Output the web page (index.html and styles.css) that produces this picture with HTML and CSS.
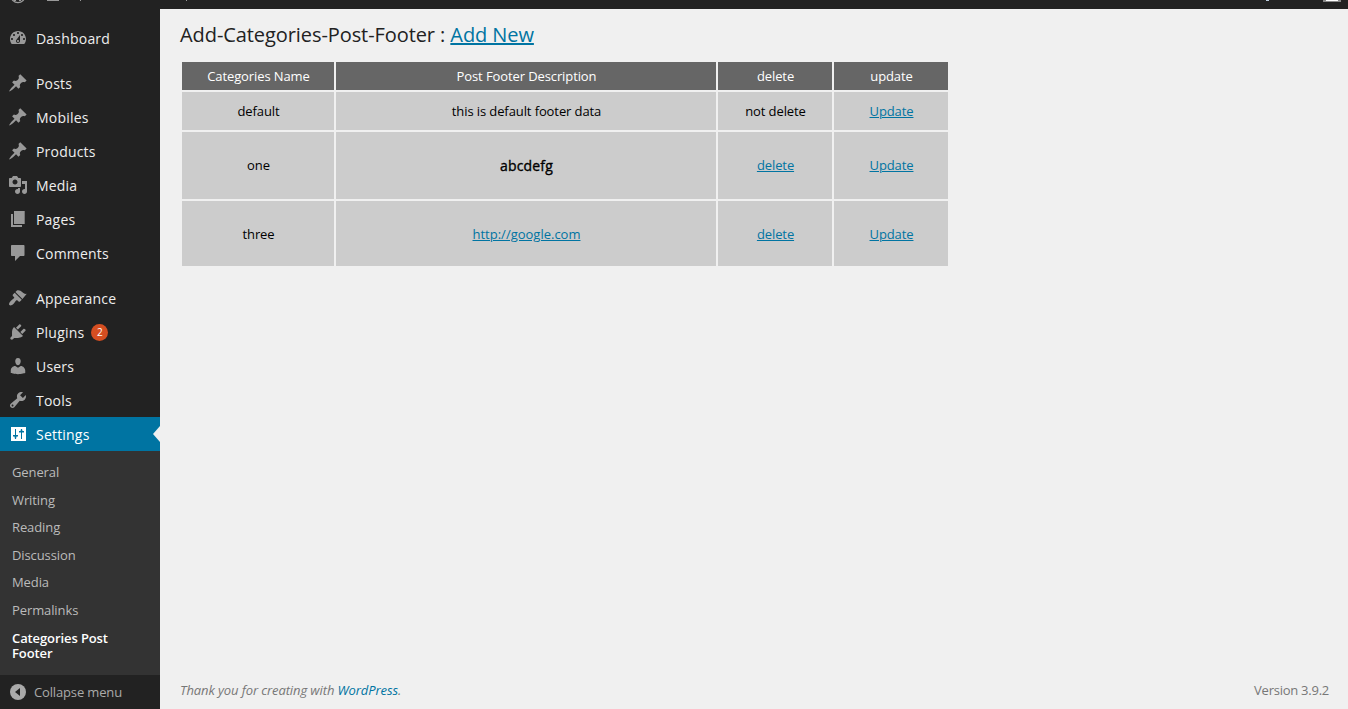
FILE: index.html
```html
<!DOCTYPE html>
<html lang="en">
<head>
<meta charset="utf-8">
<title>Categories Post Footer</title>
<link rel="stylesheet" href="styles.css">
</head>
<body>
<header class="adminbar">
  <svg class="adminbar-icons" width="200" height="9" viewBox="0 0 200 9"><circle cx="18" cy="-4.600" r="7.2" fill="none" stroke="#999" stroke-width="1.2"/><path d="M14 0h2v1h-2zM19 0h2v1h-2zM47 0h12v1h-12z" fill="#999"/><path d="M80 0h1v1h-1zM186 0h1v1h-1z" fill="#999"/></svg>
  <svg class="adminbar-user" width="90" height="9" viewBox="0 0 90 9"><path d="M8 0h3v1H8z" fill="#bcd"/><path d="M65 0h18v2H65z" fill="#888"/><path d="M68 0h12v1H68z" fill="#fff"/></svg>
</header>
<div class="shell">
  <nav class="menu">
    <a class="item"><svg class="icon" viewBox="0 0 20 20"><path fill-rule="evenodd" d="M3.76 16h12.48c1.1-1.37 1.76-3.11 1.76-5 0-4.42-3.58-8-8-8s-8 3.58-8 8c0 1.89.66 3.63 1.76 5zM10 4c.55 0 1 .45 1 1s-.45 1-1 1-1-.45-1-1 .45-1 1-1zM6 6c.55 0 1 .45 1 1s-.45 1-1 1-1-.45-1-1 .45-1 1-1zm8 0c.55 0 1 .45 1 1s-.45 1-1 1-1-.45-1-1 .45-1 1-1zm-5.37 5.55L12 7v6c0 1.1-.9 2-2 2s-2-.9-2-2c0-.57.24-1.08.63-1.45zM4 10c.55 0 1 .45 1 1s-.45 1-1 1-1-.45-1-1 .45-1 1-1zm12 0c.55 0 1 .45 1 1s-.45 1-1 1-1-.45-1-1 .45-1 1-1zm-5 3c0-.55-.45-1-1-1s-1 .45-1 1 .45 1 1 1 1-.45 1-1z"/></svg><span class="label">Dashboard</span></a>
    <div class="separator"></div>
    <a class="item"><svg class="icon" viewBox="0 0 20 20"><path id="pin" d="M10.44 3.02l1.82-1.82 6.36 6.35-1.83 1.82c-1.05-.68-2.48-.57-3.41.36l-.75.75c-.92.93-1.04 2.35-.35 3.41l-1.83 1.82-2.41-2.41-2.8 2.79c-.42.42-3.38 2.71-3.8 2.29s1.86-3.39 2.28-3.81l2.79-2.79L4.1 9.36l1.83-1.82c1.05.69 2.48.57 3.4-.36l.75-.75c.93-.92 1.05-2.35.36-3.41z"/></svg><span class="label">Posts</span></a>
    <a class="item"><svg class="icon" viewBox="0 0 20 20"><use href="#pin"/></svg><span class="label">Mobiles</span></a>
    <a class="item"><svg class="icon" viewBox="0 0 20 20"><use href="#pin"/></svg><span class="label">Products</span></a>
    <a class="item"><svg class="icon" viewBox="0 0 20 20"><path fill-rule="evenodd" d="M13 11V4c0-.55-.45-1-1-1h-1.67L9 1H5L3.67 3H2c-.55 0-1 .45-1 1v7c0 .55.45 1 1 1h10c.55 0 1-.45 1-1zM7 4.5c1.38 0 2.5 1.12 2.5 2.5S8.38 9.5 7 9.5 4.5 8.38 4.5 7 5.62 4.5 7 4.5zM14 6h5v10.5c0 1.38-1.12 2.5-2.5 2.5S14 17.88 14 16.5s1.12-2.5 2.5-2.5c.17 0 .34.02.5.05V9h-3V6zm-4 8.05V13h2v3.5c0 1.38-1.12 2.5-2.5 2.5S7 17.88 7 16.5 8.12 14 9.5 14c.17 0 .34.02.5.05z"/></svg><span class="label">Media</span></a>
    <a class="item"><svg class="icon" viewBox="0 0 20 20"><path d="M6 15V2h10.7v13H6zm-1 1h9v2H3V5h2v11z"/></svg><span class="label">Pages</span></a>
    <a class="item"><svg class="icon" viewBox="0 0 20 20"><path d="M4 2h11.5c.6 0 1 .4 1 1v9c0 .6-.4 1-1 1H12l-5 5v-5H4c-.6 0-1-.4-1-1V3c0-.6.4-1 1-1z"/></svg><span class="label">Comments</span></a>
    <div class="separator"></div>
    <a class="item"><svg class="icon" viewBox="0 0 20 20"><path d="M14.48 11.06L7.41 3.99l1.5-1.5c.5-.56 2.3-.47 3.51.32 1.21.8 1.43 1.28 2.91 2.1 1.18.64 2.45 1.26 3.45.85zm-.71.71L6.7 4.7 4.93 6.47c-.39.39-.39 1.02 0 1.41l1.06 1.06c.39.39.39 1.03 0 1.42-.6.6-1.43 1.11-2.21 1.69-.35.26-.7.53-1.01.84C1.43 14.23.4 16.08 1.4 17.07c.99 1 2.84-.03 4.18-1.36.31-.31.58-.66.85-1.02.57-.78 1.08-1.61 1.69-2.21.39-.39 1.02-.39 1.41 0l1.06 1.06c.39.39 1.02.39 1.41 0z"/></svg><span class="label">Appearance</span></a>
    <a class="item"><svg class="icon" viewBox="0 0 20 20"><path d="M13.11 4.36L9.87 7.6 8 5.73l3.24-3.24c.35-.34 1.05-.2 1.56.32.52.51.66 1.21.31 1.55zm-8 1.77l.91-1.12 9.01 9.01-1.19.84c-.71.71-2.63 1.16-3.82 1.16H6.14L4.9 17.26c-.59.59-1.54.59-2.12 0-.59-.58-.59-1.53 0-2.12l1.24-1.24v-3.88c0-1.13.4-3.19 1.09-3.89zm7.26 3.97l3.24-3.24c.34-.35 1.04-.21 1.55.31.52.51.66 1.21.31 1.55l-3.24 3.25z"/></svg><span class="label">Plugins</span><span class="count">2</span></a>
    <a class="item"><svg class="icon" viewBox="0 0 20 20"><path d="M10 9.25c-2.27 0-2.73-3.44-2.73-3.44C7 4.02 7.82 2 9.97 2c2.16 0 2.98 2.02 2.71 3.81 0 0-.41 3.44-2.68 3.44zm0 2.57L12.72 10c2.39 0 4.52 2.33 4.52 4.53v2.49s-3.65 1.13-7.24 1.13c-3.65 0-7.24-1.13-7.24-1.13v-2.49c0-2.25 1.94-4.48 4.47-4.48z"/></svg><span class="label">Users</span></a>
    <a class="item"><svg class="icon" viewBox="0 0 20 20"><path fill-rule="evenodd" d="M16.68 9.77c-1.34 1.34-3.3 1.67-4.95.99l-5.41 6.52c-.99.99-2.59.99-3.58 0s-.99-2.59 0-3.57l6.52-5.42c-.68-1.65-.35-3.61.99-4.95 1.28-1.28 3.12-1.62 4.72-1.06l-2.89 2.89 2.82 2.82 2.86-2.87c.53 1.58.18 3.39-1.08 4.65zM3.81 16.21c.4.39 1.04.39 1.43 0 .4-.4.4-1.04 0-1.43-.39-.4-1.03-.4-1.43 0-.39.39-.39 1.03 0 1.43z"/></svg><span class="label">Tools</span></a>
    <a class="item current"><svg class="icon" viewBox="0 0 20 20"><path d="M3 3h15v14H3z"/><path fill="#0074a2" d="M7 5h1v6h2v1.5H8.500L8 15H7l-.5-2.500H5V11h2zM13 5h1l.5 2H16v1.500h-2V15h-1V8.500h-2V7h1.500z"/></svg><span class="label">Settings</span></a>
    <div class="submenu">
      <a>General</a><a>Writing</a><a>Reading</a><a>Discussion</a><a>Media</a><a>Permalinks</a>
      <a class="active">Categories Post Footer</a>
    </div>
    <a class="item collapse"><svg class="icon" viewBox="0 0 20 20"><circle cx="10" cy="10" r="8"/><path d="M12 6v8l-5-4z" fill="#222"/></svg>Collapse menu</a>
  </nav>
  <main class="content">
    <h2>Add-Categories-Post-Footer : <a class="link">Add New</a></h2>
    <div class="table">
      <div class="th">Categories Name</div><div class="th">Post Footer Description</div><div class="th">delete</div><div class="th">update</div>
      <div>default</div><div>this is default footer data</div><div>not delete</div><div><a class="link">Update</a></div>
      <div class="tall">one</div><div class="strong">abcdefg</div><div class="tall"><a class="link">delete</a></div><div class="tall"><a class="link">Update</a></div>
      <div>three</div><div><a class="link url">http://google.com</a></div><div><a class="link">delete</a></div><div><a class="link">Update</a></div>
    </div>
    <footer class="footer"><em>Thank you for creating with <a>WordPress</a>.</em><span class="version">Version 3.9.2</span></footer>
  </main>
</div>
</body>
</html>
```
FILE: styles.css
```css
* { box-sizing: border-box; }
body { margin: 0; height: 709px; overflow: hidden; display: flex; flex-direction: column; background: #f0f0f0; font: 13px/18px "Open Sans", sans-serif; letter-spacing: -0.1px; color: #000; }
.adminbar { height: 9px; background: #222; display: flex; justify-content: space-between; }
.shell { flex: 1; display: flex; min-height: 0; }
.menu { width: 160px; background: #222; padding-top: 12px; display: flex; flex-direction: column; }
.item { position: relative; height: 34px; flex: none; display: flex; align-items: center; gap: 8px; padding-left: 8px; font-size: 14px; color: #eee; }
.label { padding-top: 2px; letter-spacing: 0.2px; }
.icon { width: 20px; height: 20px; fill: #999; }
.separator { height: 11px; flex: none; }
.count { width: 17px; height: 17px; margin-left: -1px; border-radius: 50%; background: #d54e21; color: #fff; font-size: 10px; letter-spacing: 0; line-height: 17px; text-align: center; }
.current { background: #0074a2; color: #fff; }
.current .icon { fill: #fff; }
.current::after { content: ""; position: absolute; right: 0; top: 9px; border: 8px solid transparent; border-left: 0; border-right: 7px solid #f0f0f0; }
.submenu { height: 224px; padding: 8px 12px 0; background: #333; color: #bbb; display: flex; flex-direction: column; }
.submenu a { height: 27.6px; flex: none; line-height: 27.6px; }
.submenu .active { width: 110px; padding-top: 6px; color: #fff; font-weight: 600; line-height: 15px; }
.collapse { font-size: 13px; letter-spacing: -0.15px; color: #aaa; gap: 6px; }
.collapse .icon { fill: #aaa; }
.content { flex: 1; padding: 11px 19px 0 20px; display: flex; flex-direction: column; }
h2 { margin: 0; font-size: 20px; line-height: 29px; font-weight: 400; letter-spacing: -0.08px; color: #222; }
.link { color: #0074a2; text-decoration: underline; }
.url { letter-spacing: 0; }
.table { margin: 13px 0 0 2px; display: grid; grid-template-columns: 152px 380px 114px 114px; grid-template-rows: 28px 38px 67px 65px; gap: 2px; }
.table > div { display: flex; align-items: center; justify-content: center; padding-left: 1px; background: #ccc; }
.table > .th { background: #666; color: #fff; }
.table > .tall { padding-bottom: 1px; }
.table > .strong { font-size: 14px; letter-spacing: 0.15px; -webkit-text-stroke: 0.35px #000; }
.footer { margin-top: auto; height: 37px; line-height: 36px; display: flex; justify-content: space-between; letter-spacing: -0.1px; color: #777; }
.footer a { color: #0074a2; }
.version { letter-spacing: -0.25px; }
```
